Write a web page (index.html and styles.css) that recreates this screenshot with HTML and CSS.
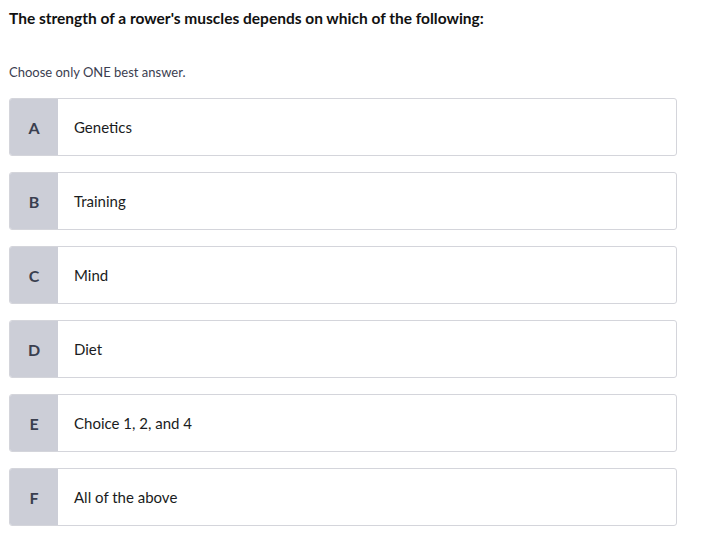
FILE: index.html
```html
<!DOCTYPE html>
<html>
<head>
<meta charset="utf-8">
<link rel="stylesheet" href="styles.css">
</head>
<body>
<div class="page">
  <h1 class="question">The strength of a rower's muscles depends on which of the following:</h1>
  <p class="hint">Choose only ONE best answer.</p>
  <div class="options">
    <div class="option"><div class="letter">A</div><div class="label">Genetics</div></div>
    <div class="option"><div class="letter">B</div><div class="label">Training</div></div>
    <div class="option"><div class="letter">C</div><div class="label">Mind</div></div>
    <div class="option"><div class="letter">D</div><div class="label">Diet</div></div>
    <div class="option"><div class="letter">E</div><div class="label">Choice 1, 2, and 4</div></div>
    <div class="option"><div class="letter">F</div><div class="label">All of the above</div></div>
  </div>
</div>
</body>
</html>
```
FILE: styles.css
```css
html, body {
  margin: 0;
  padding: 0;
  background: #ffffff;
}
body {
  font-family: Lato, "Open Sans", "Liberation Sans", sans-serif;
  color: #1b1d22;
}
.page {
  padding: 8px 30px 0 9px;
}
.question {
  margin: 0;
  font-size: 15.5px;
  font-weight: 700;
  line-height: 20px;
  color: #111111;
}
.hint {
  margin: 35px 0 0 0;
  font-size: 13px;
  line-height: 18px;
  color: #3b4050;
}
.options {
  margin-top: 17px;
  display: flex;
  flex-direction: column;
  gap: 16px;
  width: 668px;
}
.option {
  display: flex;
  height: 58px;
  box-sizing: border-box;
  border: 1px solid #d4d5db;
  border-radius: 3px;
  overflow: hidden;
}
.letter {
  width: 48px;
  background: #ccced7;
  display: flex;
  align-items: center;
  justify-content: center;
  font-size: 16px;
  font-weight: 700;
  color: #3a3f4f;
}
.label {
  display: flex;
  align-items: center;
  padding-left: 16px;
  font-size: 15px;
  color: #1a1c21;
}
```
